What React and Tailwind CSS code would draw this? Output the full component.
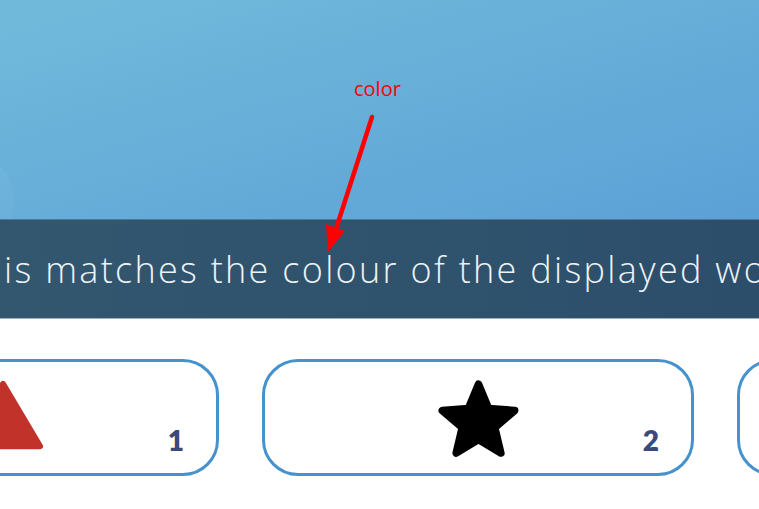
import React from "react";

const starPoints = (() => {
    const pts = [];
    for (let i = 0; i < 10; i++) {
        const r = i % 2 === 0 ? 40 : 18;
        const a = (Math.PI / 5) * i - Math.PI / 2;
        pts.push(`${(50 + r * Math.cos(a)).toFixed(2)},${(54 + r * Math.sin(a)).toFixed(2)}`);
    }
    return pts.join(" ");
})();

function Star() {
    return (
        <svg width="95" height="95" viewBox="0 0 100 100">
            <polygon points={starPoints} fill="#000" stroke="#000" strokeWidth="8" strokeLinejoin="round" />
        </svg>
    );
}

function Triangle() {
    return (
        <svg width="82" height="74" viewBox="0 0 84 74">
            <polygon points="42,4 80,68 4,68" fill="#c0322a" stroke="#c0322a" strokeWidth="6" strokeLinejoin="round" />
        </svg>
    );
}

function Card({ number, children }) {
    return (
        <div className="relative shrink-0 w-[432px] h-[117px] rounded-[36px] border-[3px] border-[#4592cd] bg-white flex items-center justify-center">
            {children}
            {number && (
                <span className="absolute right-[32px] bottom-[19px] text-[28px] font-extrabold leading-none text-[#3c4a79] font-['Lato',sans-serif]">
                    {number}
                </span>
            )}
        </div>
    );
}

export default function App() {
    return (
        <div className="relative w-[759px] h-[509px] overflow-hidden bg-white">
            <div className="relative h-[219px] bg-gradient-to-br from-[#72badb] to-[#5ca1d6] overflow-hidden">
                <div className="absolute left-[-86px] top-[150px] w-[100px] h-[100px] rounded-full bg-white/[0.04]"></div>
            </div>

            <div className="h-[100px] flex items-center overflow-hidden border-t border-[#4d7995] border-b border-b-[#9fb0bd] bg-gradient-to-r from-[#33576f] to-[#2c4e6b]">
                <p className="pl-[4px] pt-[2px] whitespace-nowrap text-[36px] font-light tracking-[2.3px] text-[#eef3f6] font-['Open_Sans',sans-serif]">
                    is matches the colour of the displayed word
                </p>
            </div>

            <div className="flex gap-[43px] ml-[-213px] pt-[40px]">
                <Card number="1">
                    <div className="pb-[4px]"><Triangle /></div>
                </Card>
                <Card number="2">
                    <div className="pt-[2px]"><Star /></div>
                </Card>
                <Card />
            </div>

            <span className="absolute left-[354px] top-[79px] text-[20px] leading-none text-[#ff0000] font-['Open_Sans',sans-serif]">
                color
            </span>
            <svg className="absolute left-0 top-0" width="759" height="509" viewBox="0 0 759 509">
                <line x1="372" y1="117" x2="336" y2="229" stroke="#ff0000" strokeWidth="4.5" strokeLinecap="round" />
                <polygon points="328,252 326,224 345,231" fill="#ff0000" />
            </svg>
        </div>
    );
}
